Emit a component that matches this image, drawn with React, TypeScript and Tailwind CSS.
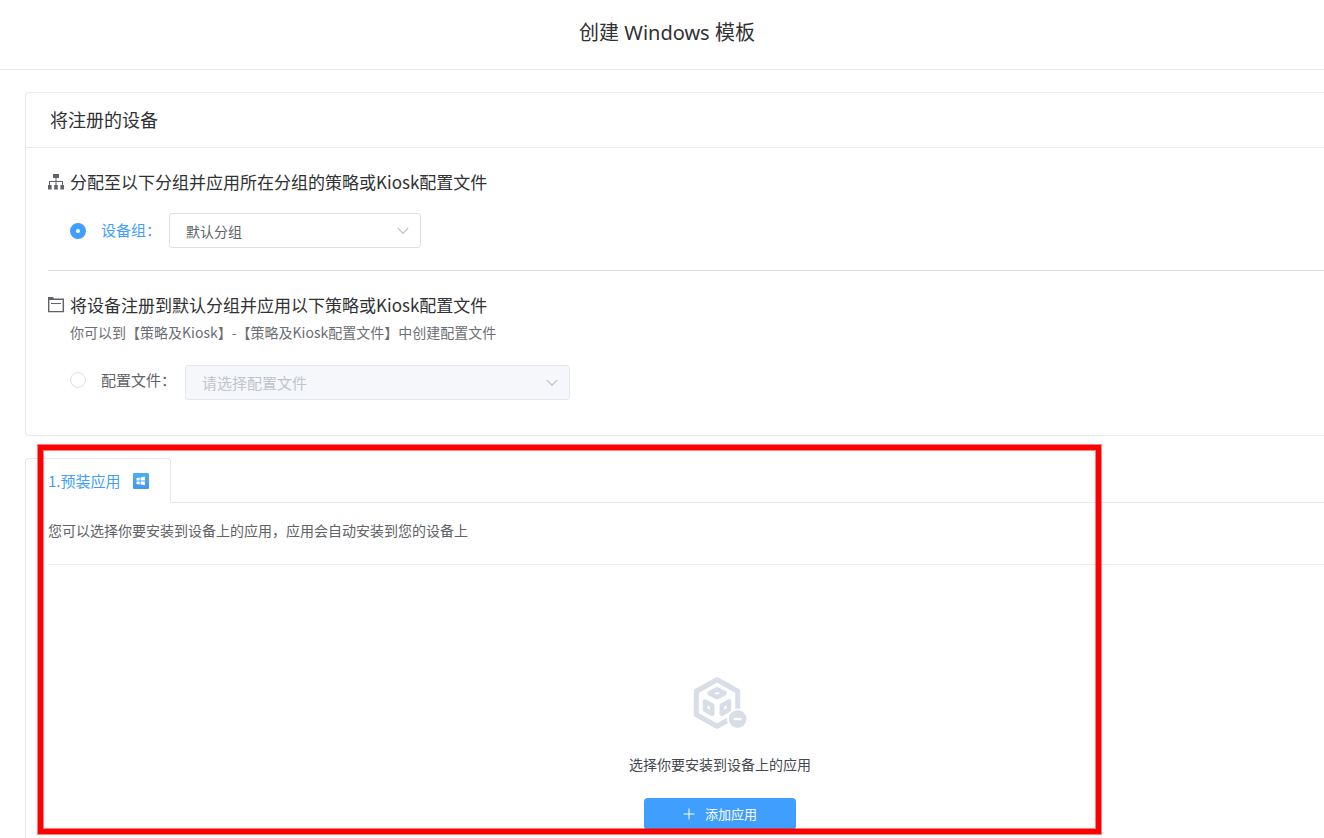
import { useState, type ReactNode, type SelectHTMLAttributes } from "react";

function OrgIcon() {
  return (
    <svg width="16" height="16" viewBox="0 0 16 16" fill="#606266" aria-hidden="true">
      <path d="M5 0h6v4H5zM7.5 4h1v3h-1zM1 7h14v1H1zM1 8h1v3H1zM7.5 8h1v3h-1zM14 8h1v3h-1z" />
      <path d="M0 11h3.6v4.4H0zM6.2 11h3.6v4.4H6.2zM12.4 11H16v4.4h-3.6z" />
    </svg>
  );
}

function FolderIcon() {
  return (
    <svg width="16" height="16" viewBox="0 0 16 16" fill="none" stroke="#606266" aria-hidden="true">
      <path d="M.7 2v12.6h14.6V2.3H5" strokeWidth="1.4" />
      <path d="M0 0h5.2l1 3H0z" fill="#606266" stroke="none" />
      <path d="M3 6.5h10" />
    </svg>
  );
}

function WindowsIcon() {
  return (
    <svg width="16" height="16" viewBox="0 0 16 16" aria-hidden="true">
      <defs>
        <linearGradient id="win-bg" x1="0" y1="0" x2="0" y2="1">
          <stop offset="0" stopColor="#4ab0f2" />
          <stop offset="1" stopColor="#4595ee" />
        </linearGradient>
      </defs>
      <rect width="16" height="16" rx="1" fill="url(#win-bg)" />
      <path
        d="M3.5 5l3.2-.5v3H3.5zM7.6 4.4l4.4-.8v3.9H7.6zM3.5 8.4h3.2v3l-3.2-.5zM7.6 8.4H12v3.9l-4.4-.8z"
        fill="#fff"
      />
    </svg>
  );
}

function EmptyIcon() {
  return (
    <svg width="54" height="52" viewBox="0 0 54 52" aria-hidden="true">
      <g fill="none" stroke="#d8dde8" strokeLinejoin="round">
        <path d="M24 2.7L44.7 14.3V37.7L24 49.3 3.3 37.7V14.3z" strokeWidth="5" />
        <path d="M24 12.2L31.6 16.2 24 20.2 16.4 16.2z" strokeWidth="4.4" />
        <path d="M12 24.4l7.2 4v8.4l-7.2-4z" strokeWidth="4.6" />
        <path d="M36 24.4l-7.2 4v8.4l7.2-4z" strokeWidth="4.6" />
      </g>
      <circle cx="44.6" cy="42" r="10.6" fill="#fff" />
      <circle cx="44.6" cy="42" r="8.8" fill="#d8dde8" />
      <path d="M40.5 42h8" stroke="#fff" strokeWidth="2.2" />
    </svg>
  );
}

function Select({ className, children, ...props }: SelectHTMLAttributes<HTMLSelectElement>) {
  return (
    <div className={`relative ${className ?? ""}`}>
      <select
        className="h-[35px] w-full appearance-none rounded-[3px] border border-[#dcdfe6] bg-white px-4 text-sm text-[#606266] outline-none disabled:border-[#e4e7ed] disabled:bg-[#f5f7fa] disabled:text-[15px] disabled:text-[#c0c4cc] disabled:opacity-100"
        {...props}
      >
        {children}
      </select>
      <svg
        className="pointer-events-none absolute top-3 right-3"
        width="12"
        height="12"
        viewBox="0 0 12 12"
        fill="none"
        stroke="#c0c4cc"
        strokeWidth="1.2"
        aria-hidden="true"
      >
        <path d="M.8 3L6 8.3 11.2 3" />
      </svg>
    </div>
  );
}

function SectionTitle({ icon, children }: { icon: ReactNode; children: ReactNode }) {
  return (
    <h3 className="flex h-7 items-center gap-[6px] text-[17px] whitespace-nowrap text-[#303133]">
      {icon}
      {children}
    </h3>
  );
}

const radioClass =
  "size-4 shrink-0 appearance-none rounded-full border border-[#dcdfe6] bg-white checked:border-[6px] checked:border-[#409eff]";

export default function App() {
  const [target, setTarget] = useState("group");

  return (
    <div
      lang="zh-CN"
      className="flex min-h-screen flex-col overflow-x-hidden bg-white font-['Noto_Sans_CJK_SC',sans-serif] text-[#606266]"
    >
      <header className="flex h-[70px] items-start justify-center border-b border-[#e8eaec] pt-[17px] pl-[10px]">
        <h1 className="font-['Noto_Sans','Noto_Sans_CJK_SC',sans-serif] text-xl leading-8 text-[#303133]">
          创建 Windows 模板
        </h1>
      </header>

      {/* The form is wider than the window and runs off its right edge */}
      <main className="-mr-[90px] ml-[25px] flex grow flex-col pt-[22px]">
        <section className="rounded border border-[#e8eaec]">
          <h2 className="flex h-[55px] items-center border-b border-[#e8eaec] px-6 pb-[2px] text-lg text-[#303133]">
            将注册的设备
          </h2>
          <div className="px-[22px]">
            <div className="border-b border-[#dcdfe6] pt-5 pb-[22px]">
              <SectionTitle icon={<OrgIcon />}>分配至以下分组并应用所在分组的策略或Kiosk配置文件</SectionTitle>
              <div className="mt-[17px] flex items-center pl-[22px]">
                <input
                  id="target-group"
                  type="radio"
                  name="target"
                  className={radioClass}
                  checked={target === "group"}
                  onChange={() => setTarget("group")}
                />
                <label
                  htmlFor="target-group"
                  className={`ml-[15px] w-[68px] text-[15px] whitespace-nowrap ${target === "group" ? "text-[#409eff]" : ""}`}
                >
                  设备组：
                </label>
                <Select className="w-[252px]" aria-label="设备组" disabled={target !== "group"}>
                  <option>默认分组</option>
                </Select>
              </div>
            </div>

            <div className="pt-5 pb-[35px]">
              <SectionTitle icon={<FolderIcon />}>将设备注册到默认分组并应用以下策略或Kiosk配置文件</SectionTitle>
              <p className="pl-[22px] text-sm leading-[26px] text-[#6b6e75]">
                你可以到【策略及Kiosk】-【策略及Kiosk配置文件】中创建配置文件
              </p>
              <div className="mt-5 flex items-start pl-[22px]">
                <div className="flex h-[30px] items-center">
                  <input
                    id="target-profile"
                    type="radio"
                    name="target"
                    className={radioClass}
                    checked={target === "profile"}
                    onChange={() => setTarget("profile")}
                  />
                  <label
                    htmlFor="target-profile"
                    className={`ml-[15px] w-[84px] text-[15px] whitespace-nowrap ${target === "profile" ? "text-[#409eff]" : ""}`}
                  >
                    配置文件：
                  </label>
                </div>
                <Select className="w-[385px]" aria-label="配置文件" disabled={target !== "profile"}>
                  <option>请选择配置文件</option>
                </Select>
              </div>
            </div>
          </div>
        </section>

        <section className="relative mt-[22px] flex grow flex-col">
          <div className="flex">
            <button
              type="button"
              className="flex h-[45px] w-[146px] items-center gap-3 rounded-t border border-b-0 border-[#e4e7ed] pl-[22px] text-[15px] whitespace-nowrap text-[#409eff]"
            >
              1.预装应用
              <WindowsIcon />
            </button>
            <div className="grow border-b border-[#e4e7ed]" />
          </div>

          <div className="grow border-l border-[#e8eaec] px-[22px]">
            <p className="border-b border-[#e8eaec] pt-[15px] pb-[22px] text-sm leading-6">
              您可以选择你要安装到设备上的应用，应用会自动安装到您的设备上
            </p>
            <div className="flex flex-col items-center pt-28">
              <EmptyIcon />
              <p className="mt-[23px] text-sm leading-6 text-[#45484f]">选择你要安装到设备上的应用</p>
              <button
                type="button"
                className="mt-[22px] flex h-8 w-[152px] items-center justify-center gap-[10px] rounded bg-[#409eff] text-[13px] text-white"
              >
                <svg width="12" height="12" viewBox="0 0 12 12" stroke="#fff" aria-hidden="true">
                  <path d="M6 .5v11M.5 6h11" />
                </svg>
                添加应用
              </button>
            </div>
          </div>

          {/* Red highlight drawn over the preinstalled apps area */}
          <div className="pointer-events-none absolute -top-[13px] right-[313px] bottom-1 left-[13px] border-5 border-[#ff0000] shadow-[0_0_0_1px_#ff000080,inset_0_0_0_1px_#ff000080]" />
        </section>
      </main>
    </div>
  );
}
